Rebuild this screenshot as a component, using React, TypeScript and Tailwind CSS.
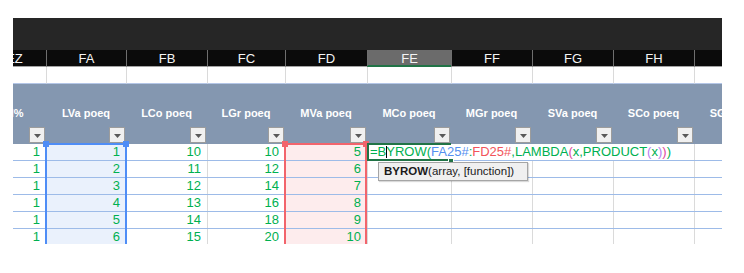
const cols = [
  { letter: 'EZ', title: 'al%', vals: ['1', '1', '1', '1', '1', '1'], fill: '' },
  { letter: 'FA', title: 'LVa poeq', vals: ['1', '2', '3', '4', '5', '6'], fill: 'bg-[#eaf1fc]' },
  { letter: 'FB', title: 'LCo poeq', vals: ['10', '11', '12', '13', '14', '15'], fill: '' },
  { letter: 'FC', title: 'LGr poeq', vals: ['10', '12', '14', '16', '18', '20'], fill: '' },
  { letter: 'FD', title: 'MVa poeq', vals: ['5', '6', '7', '8', '9', '10'], fill: 'bg-[#fdeced]' },
  { letter: 'FE', title: 'MCo poeq', vals: ['', '', '', '', '', ''], fill: '' },
  { letter: 'FF', title: 'MGr poeq', vals: ['', '', '', '', '', ''], fill: '' },
  { letter: 'FG', title: 'SVa poeq', vals: ['', '', '', '', '', ''], fill: '' },
  { letter: 'FH', title: 'SCo poeq', vals: ['', '', '', '', '', ''], fill: '' },
  { letter: 'FI', title: 'SGr poeq', vals: ['', '', '', '', '', ''], fill: '' },
]

const grid = 'grid grid-cols-[64px_80px_81px_78px_82px_84px_81px_81px_81px_81px]'

function FilterButton() {
  return (
    <div className="w-[16px] h-[16px] mr-[1px] mb-[1px] border border-[#9c9c9c] bg-[#f0f0f0] flex items-center justify-center pt-[2px]">
      <svg width="7" height="4" viewBox="0 0 7 4">
        <path d="M0 0h7L3.5 4z" fill="#595959" />
      </svg>
    </div>
  )
}

function Handle({ pos, color }: { pos: string; color: string }) {
  return <div className={`absolute top-[-3px] w-[6px] h-[6px] ${pos} ${color}`} />
}

export default function App() {
  return (
    <div className="w-[744px] h-[273px] bg-white overflow-hidden font-['Liberation_Sans',Arial,sans-serif]">
      <div className="ml-[13px] mt-[18px] w-[709px] overflow-hidden">
        <div className="-ml-[31px] w-[793px]">
          {/* dark ribbon edge */}
          <div className="h-[32px] bg-[#262626]" />

          {/* column letters */}
          <div className={grid}>
            {cols.map((c) => (
              <div
                key={c.letter}
                className={
                  c.letter === 'FE'
                    ? 'h-[17px] border-l border-[#6e6e6e] border-b-2 border-b-[#217346] bg-[#6b6b6b] text-center text-[13px] leading-[16px] pt-[1px] text-[#f4f4f4]'
                    : 'h-[17px] border-l border-[#6e6e6e] border-b border-b-[#a3a3a3] bg-[#0b0b0b] text-center text-[13px] leading-[16px] pt-[1px] text-[#f4f4f4]'
                }
              >
                {c.letter}
              </div>
            ))}
          </div>

          {/* empty row */}
          <div className={grid}>
            {cols.map((c) => (
              <div key={c.letter} className="h-[17px] border-l border-[#dadada] border-b border-b-[#b4c6e7]" />
            ))}
          </div>

          {/* table header */}
          <div className={`${grid} h-[60px] bg-[#8497b0]`}>
            {cols.map((c) => (
              <div key={c.letter} className="flex flex-col">
                <div className="pt-[23px] text-center text-[11px] leading-[13px] font-bold text-white whitespace-nowrap">
                  {c.title}
                </div>
                <div className="mt-auto flex justify-end">
                  <FilterButton />
                </div>
              </div>
            ))}
          </div>

          {/* data */}
          <div className="relative h-[100px]">
            {[0, 1, 2, 3, 4, 5].map((r) => (
              <div
                key={r}
                className={r < 5 ? `${grid} h-[17px] border-b border-[#9dbbe8]` : `${grid} h-[15px] overflow-hidden`}
              >
                {cols.map((c) => (
                  <div
                    key={c.letter}
                    className={`border-l border-[#dadada] text-right pr-[6px] text-[13px] leading-[16px] text-[#00b050] ${c.fill}`}
                  >
                    {c.vals[r]}
                  </div>
                ))}
              </div>
            ))}

            {/* FA25# spill reference */}
            <div className="absolute left-[63px] top-[-1px] bottom-0 w-[82px] border-2 border-b-0 border-[#4f8df6]" />
            <Handle pos="left-[61px]" color="bg-[#4f8df6]" />
            <Handle pos="left-[141px]" color="bg-[#4f8df6]" />

            {/* FD25# spill reference */}
            <div className="absolute left-[302px] top-[-1px] bottom-0 w-[83px] border-2 border-b-0 border-[#f2646c]" />
            <Handle pos="left-[300px]" color="bg-[#f2646c]" />
            <Handle pos="left-[381px]" color="bg-[#f2646c]" />

            {/* in-cell edit */}
            <div className="absolute left-[387px] top-0 h-[16px] w-[325px] bg-white pl-[1px] text-[13px] leading-[16px] text-[#00b050] whitespace-nowrap">
              =B
              <span className="relative inline-block w-0 h-[16px] align-top">
                <span className="absolute left-0 top-[2px] w-px h-[12px] bg-black" />
              </span>
              YROW(
              <span className="text-[#5590f0]">FA25#</span>:
              <span className="text-[#f2545b]">FD25#</span>,LAMBDA
              <span className="text-[#e2489a]">(</span>x,PRODUCT
              <span className="text-[#b57cf2]">(</span>x
              <span className="text-[#b57cf2]">)</span>
              <span className="text-[#e2489a]">)</span>)
            </div>
            <div className="absolute left-[385px] top-[-1px] w-[84px] h-[18px] border-2 border-r-0 border-[#217346]" />
            <div className="absolute left-[466px] top-[14px] w-[6px] h-[5px] bg-[#217346] border border-white" />

            {/* function tooltip */}
            <div className="absolute left-[396px] top-[18px] w-[150px] h-[19px] bg-[#f0f0f0] border border-[#a5a5a5] shadow-[1px_1px_1px_rgba(0,0,0,0.15)] px-[5px] text-[11.5px] leading-[17px] text-[#1b1b1b] whitespace-nowrap">
              <span className="font-bold">BYROW</span>(array, [function])
            </div>
          </div>
        </div>
      </div>
    </div>
  )
}
